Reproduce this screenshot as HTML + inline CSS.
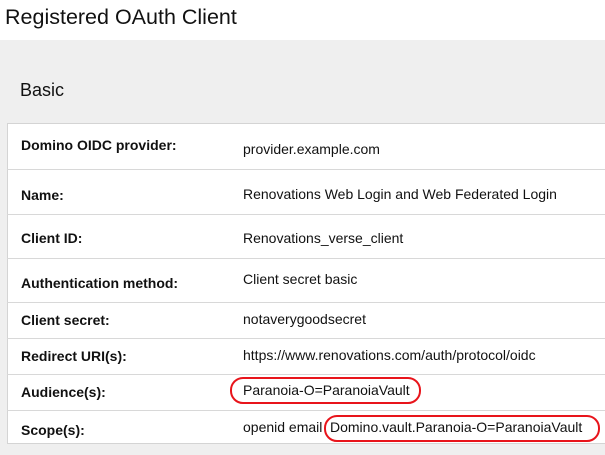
<!DOCTYPE html>
<html><head><meta charset="utf-8"><style>
body{margin:0;width:605px;height:455px;overflow:hidden;background:#fff;font-family:"Liberation Sans",sans-serif;color:#111;position:relative}
.t{position:absolute;left:5px;top:3px;font-size:21.5px;line-height:28px}
.panel{position:absolute;left:0;top:40px;width:605px;height:415px;background:#efefef}
.basic{position:absolute;left:20px;top:78px;font-size:18px;line-height:24px}
.tbl{position:absolute;left:7px;top:123px;width:610px;height:321px;background:#fff;border:1px solid #d4d4d4;box-sizing:border-box}
.ln{position:absolute;left:7px;width:600px;height:1px;background:#d8d8d8}
.l{position:absolute;left:21px;font-size:14px;font-weight:bold;line-height:16px;margin-top:-8px}
.v{position:absolute;left:243px;font-size:14px;line-height:16px;margin-top:-8px;white-space:nowrap}
.o{position:absolute;border:2.5px solid #e8141b;border-radius:13px;box-sizing:border-box}
</style></head><body>
<div class="t">Registered OAuth Client</div>
<div class="panel"></div>
<div class="basic">Basic</div>
<div class="tbl"></div>
<div class="ln" style="top:169px"></div>
<div class="ln" style="top:214px"></div>
<div class="ln" style="top:258px"></div>
<div class="ln" style="top:302px"></div>
<div class="ln" style="top:338px"></div>
<div class="ln" style="top:374px"></div>
<div class="ln" style="top:410px"></div>
<div class="l" style="top:145px">Domino OIDC provider:</div>
<div class="l" style="top:195px">Name:</div>
<div class="l" style="top:238px">Client ID:</div>
<div class="l" style="top:283px">Authentication method:</div>
<div class="l" style="top:320px">Client secret:</div>
<div class="l" style="top:356px">Redirect URI(s):</div>
<div class="l" style="top:392px">Audience(s):</div>
<div class="l" style="top:430px">Scope(s):</div>
<div class="v" style="top:149px">provider.example.com</div>
<div class="v" style="top:194px">Renovations Web Login and Web Federated Login</div>
<div class="v" style="top:238px">Renovations_verse_client</div>
<div class="v" style="top:279px">Client secret basic</div>
<div class="v" style="top:319px">notaverygoodsecret</div>
<div class="v" style="top:355px">https://www.renovations.com/auth/protocol/oidc</div>
<div class="v" style="top:390px">Paranoia-O=ParanoiaVault</div>
<div class="v" style="top:427px">openid email&nbsp;Domino.vault.Paranoia-O=ParanoiaVault</div>
<div class="o" style="left:230px;top:377px;width:191px;height:27px"></div>
<div class="o" style="left:324px;top:415px;width:276px;height:27px;background:#fff"></div>
<div class="v" style="left:330px;top:427px">Domino.vault.Paranoia-O=ParanoiaVault</div>
</body></html>
